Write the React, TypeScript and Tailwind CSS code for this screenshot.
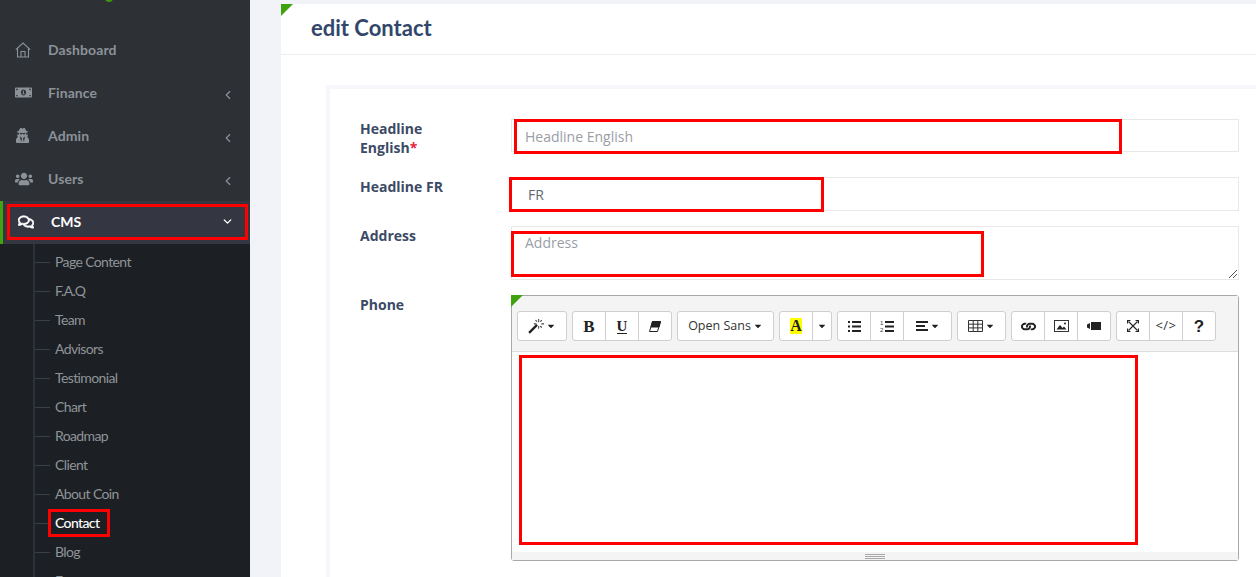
import React from "react";
import { FaMoneyBillAlt, FaUserSecret, FaUsers, FaRegComments, FaLink, FaCaretDown } from "react-icons/fa";
import { ChevronLeft, ChevronDown } from "lucide-react";

const Home = () => (
  <svg width="16" height="16" viewBox="0 0 16 16" fill="none" stroke="#8b9298" strokeWidth="1.1">
    <path d="M0.8 7.6 8 1l7.2 6.6M2.5 6.5V15h11V6.5M6 15V9.5h4V15" />
  </svg>
);

const Tool = ({ children, className = "w-[33px]" }: { children: React.ReactNode; className?: string }) => (
  <span className={`flex h-full shrink-0 items-center justify-center gap-[2px] border-r border-[#cfcfcf] text-[#222] last:flex-1 last:border-r-0 ${className}`}>
    {children}
  </span>
);

const Group = ({ children, className }: { children: React.ReactNode; className: string }) => (
  <div className={`flex h-[30px] shrink-0 overflow-hidden rounded-[3px] border border-[#cfcfcf] bg-white ${className}`}>{children}</div>
);

const Caret = () => <FaCaretDown className="text-[10px] text-[#222]" />;

const Magic = () => (
  <svg width="16" height="16" viewBox="0 0 15 15" fill="none">
    <path d="M1 14 8.5 6.5" stroke="#222" strokeWidth="2.2" />
    <path d="M10 1v3M10 7.5v2.5M5.5 5.5h2.5M12.5 5.5H15M7 2l1.5 1.5M13 2l-1.5 1.5M13 9l-1.5-1.5" stroke="#444" strokeWidth="1" />
  </svg>
);
const Eraser = () => (
  <svg width="12" height="11" viewBox="0 0 12 11">
    <path d="M3.5 0.5H11.5L8.5 10.5H0.5Z" fill="#fff" stroke="#222" />
    <path d="M3.5 0.5H11.5L10 6H2Z" fill="#222" stroke="#222" />
  </svg>
);
const Bullets = () => (
  <svg width="13" height="11" viewBox="0 0 13 11" fill="#222">
    <rect x="0" y="0" width="2" height="2" /><rect x="0" y="4.5" width="2" height="2" /><rect x="0" y="9" width="2" height="2" />
    <rect x="4" y="0" width="9" height="2" /><rect x="4" y="4.5" width="9" height="2" /><rect x="4" y="9" width="9" height="2" />
  </svg>
);
const Numbers = () => (
  <svg width="14" height="13" viewBox="0 0 14 13" fill="#222">
    <rect x="5" y="1" width="9" height="2" /><rect x="5" y="5.5" width="9" height="2" /><rect x="5" y="10" width="9" height="2" />
    <text x="0" y="5" fontSize="6" fill="#333" fontFamily="Liberation Sans">1</text>
    <text x="0" y="12" fontSize="6" fill="#333" fontFamily="Liberation Sans">2</text>
  </svg>
);
const Align = () => (
  <svg width="12" height="10" viewBox="0 0 12 10" fill="#222">
    <rect width="12" height="2" /><rect y="4" width="9" height="2" /><rect y="8" width="12" height="2" />
  </svg>
);
const Grid = () => (
  <svg width="15" height="12" viewBox="0 0 15 12" fill="none" stroke="#333" strokeWidth="1">
    <path d="M.5.5h14v11H.5zM.5 4.2h14M.5 7.9h14M5.2.5v11M9.8.5v11" />
  </svg>
);
const Picture = () => (
  <svg width="15" height="12" viewBox="0 0 15 12">
    <rect x=".5" y=".5" width="14" height="11" fill="none" stroke="#333" />
    <path d="M2.5 9.5 6 5l2.5 3L10 6.5l2.5 3z" fill="#222" />
    <circle cx="11" cy="3.5" r="1" fill="#222" />
  </svg>
);
const Video = () => (
  <svg width="14" height="8" viewBox="0 0 14 8" fill="#222">
    <path d="M0 2.5 3 1v6L0 5.5z" /><rect x="4" y="0" width="10" height="8" />
  </svg>
);
const Expand = () => (
  <svg width="12" height="12" viewBox="0 0 12 12" fill="none" stroke="#222">
    <path d="M1.5 1.5l9 9M10.5 1.5l-9 9" strokeWidth="1.1" />
    <path d="M.5 3.5v-3h3M8.5.5h3v3M11.5 8.5v3h-3M3.5 11.5h-3v-3" strokeWidth="1.2" />
  </svg>
);

const mainItems = [
  { label: "Dashboard", icon: <Home /> },
  { label: "Finance", icon: <FaMoneyBillAlt className="text-[17px] text-[#8b9298]" />, arrow: true },
  { label: "Admin", icon: <FaUserSecret className="text-[15px] text-[#8b9298]" />, arrow: true },
  { label: "Users", icon: <FaUsers className="text-[18px] text-[#8b9298]" />, arrow: true },
];

const subItems = ["Page Content", "F.A.Q", "Team", "Advisors", "Testimonial", "Chart", "Roadmap", "Client", "About Coin", "Contact", "Blog", "Faq"];

export default function App() {
  return (
    <div className="flex h-[577px] w-[1256px] overflow-hidden bg-[#f1f3f9] font-['Open_Sans',sans-serif]">
      <aside className="flex w-[250px] shrink-0 flex-col overflow-hidden bg-[#2d3035] font-['Lato',sans-serif]">
        <div className="flex h-[29px] shrink-0 items-start justify-center gap-[5px] pl-[4px]">
          <span className="-mt-[6px] h-[8px] w-[8px] rounded-full bg-[#3c9a0e]" />
          <span className="-mt-[12px] text-[11px] text-[#3c9a0e]">Admin</span>
        </div>
        {mainItems.map((it) => (
          <div key={it.label} className="flex h-[43px] shrink-0 items-center pb-[2px] pl-[15px] pr-[15px]">
            <span className="flex w-[33px] justify-start">{it.icon}</span>
            <span className="flex-1 text-[14px] font-bold tracking-[0.1px] text-[#8b9298]">{it.label}</span>
            {it.arrow && <ChevronLeft size={14} strokeWidth={2} className="mt-[4px] text-[#8b9298]" />}
          </div>
        ))}
        <div className="relative flex h-[43px] shrink-0 items-center bg-[#343741] pb-[2px] pl-[18px] pr-[16px]">
          <span className="absolute bottom-0 left-0 top-0 w-[3px] bg-[#3ea30e]" />
          <span className="absolute bottom-[4px] left-[7px] right-[2px] top-[3px] border-[3px] border-[#ff0000]" />
          <FaRegComments className="text-[16px] text-white" stroke="currentColor" strokeWidth={24} />
          <span className="ml-[17px] flex-1 text-[14px] font-bold text-white">CMS</span>
          <ChevronDown size={13} strokeWidth={2.6} className="text-white" />
        </div>
        <div className="relative flex-1 bg-[#1c1f23] pt-[3px]">
          <span className="absolute bottom-0 left-[33px] top-0 w-[2px] bg-[#2d3238]" />
          {subItems.map((s) => (
            <div key={s} className="relative flex h-[29px] shrink-0 items-center pl-[55px]">
              <span className="absolute left-[35px] top-[15px] h-[1px] w-[15px] bg-[#3a3f45]" />
              <span className={`relative text-[14px] tracking-[-0.62px] ${s === "Contact" ? "font-medium text-white" : "text-[#8f9499]"}`}>
                {s}
                {s === "Contact" && <span className="absolute -bottom-[4px] -left-[7px] -right-[11px] -top-[3px] border-[3px] border-[#ff0000]" />}
              </span>
            </div>
          ))}
        </div>
      </aside>

      <main className="min-w-0 flex-1 pl-[31px] pt-[4px]">
        <section className="relative h-[600px] bg-white">
          <span className="absolute left-0 top-0 h-0 w-0 border-r-[12px] border-t-[12px] border-r-transparent border-t-[#3ea30e]" />
          <header className="flex h-[51px] items-center border-b border-[#eceef4] pb-[4px] pl-[30px]">
            <h1 className="font-['Lato',sans-serif] text-[22px] font-bold text-[#32466b]">edit Contact</h1>
          </header>
          <div className="ml-[45px] mt-[30px] h-[520px] border-l-[4px] border-t-[4px] border-[#f6f7fa] pl-[30px] pr-[17px] pt-[30px]">
            <div className="flex h-[58px]">
              <label className="w-[151px] text-[14px] font-bold leading-[19px] text-[#3c4a66]">
                Headline<br />English<span className="text-[#e8203c]">*</span>
              </label>
              <div className="relative h-[33px] flex-1 border border-[#e8e8e8] pl-[13px] text-[14px] leading-[33px] text-[#9a9ea6]">
                Headline English
                <span className="absolute -left-[1px] -top-[1px] h-[35px] w-[608px] translate-x-[3px] border-[3px] border-[#ff0000]" />
              </div>
            </div>
            <div className="flex h-[49px]">
              <label className="w-[151px] text-[14px] font-bold leading-[19px] text-[#3c4a66]">Headline FR</label>
              <div className="relative h-[34px] flex-1 border border-[#e8e8e8] pl-[16px] text-[14px] leading-[34px] text-[#5f6772]">
                FR
                <span className="absolute -left-[3px] -top-[1px] h-[35px] w-[315px] border-[3px] border-[#ff0000]" />
              </div>
            </div>
            <div className="flex h-[69px]">
              <label className="w-[151px] text-[14px] font-bold leading-[19px] text-[#3c4a66]">Address</label>
              <div className="relative h-[54px] flex-1 border border-[#e8e8e8] pl-[13px] pt-[6px] text-[14px] leading-[19px] text-[#9a9ea6]">
                Address
                <span className="absolute -left-[1px] top-[4px] h-[46px] w-[473px] border-[3px] border-[#ff0000]" />
                <svg className="absolute bottom-[1px] right-[1px]" width="9" height="9" viewBox="0 0 9 9" stroke="#555" strokeWidth="1"><path d="M1 9 9 1M5 9 9 5" /></svg>
              </div>
            </div>
            <div className="flex">
              <label className="w-[151px] text-[14px] font-bold leading-[19px] text-[#3c4a66]">Phone</label>
              <div className="relative h-[266px] flex-1 rounded-[3px] border border-[#a9a9a9]">
                <span className="absolute -left-[1px] -top-[1px] z-10 h-0 w-0 border-r-[12px] border-t-[12px] border-r-transparent border-t-[#3ea30e]" />
                <div className="flex h-[56px] gap-[5px] border-b border-[#dedede] bg-[#f4f4f4] pl-[5px] pt-[15px]">
                  <Group className="w-[50px]"><Tool className="w-[48px]"><Magic /><Caret /></Tool></Group>
                  <Group className="w-[100px]">
                    <Tool><span className="font-['Liberation_Serif',serif] text-[17px] font-bold leading-none">B</span></Tool>
                    <Tool><span className="border-b-[1.5px] border-[#222] font-['Liberation_Serif',serif] text-[15px] font-bold leading-[14px]">U</span></Tool>
                    <Tool><Eraser /></Tool>
                  </Group>
                  <Group className="w-[97px]"><Tool className="w-[95px]"><span className="text-[12.5px] text-[#333]">Open Sans</span><Caret /></Tool></Group>
                  <Group className="w-[53px]">
                    <Tool><span className="flex h-[16px] w-[12px] items-center justify-center bg-[#ffff00] font-['Liberation_Serif',serif] text-[16px] font-bold leading-none">A</span></Tool>
                    <Tool className="w-[18px]"><Caret /></Tool>
                  </Group>
                  <Group className="w-[115px]">
                    <Tool><Bullets /></Tool>
                    <Tool><Numbers /></Tool>
                    <Tool className="w-[47px]"><Align /><Caret /></Tool>
                  </Group>
                  <Group className="w-[49px]"><Tool className="w-[47px]"><Grid /><Caret /></Tool></Group>
                  <Group className="w-[100px]">
                    <Tool><FaLink className="rotate-45 text-[13px]" /></Tool>
                    <Tool><Picture /></Tool>
                    <Tool><Video /></Tool>
                  </Group>
                  <Group className="w-[100px]">
                    <Tool><Expand /></Tool>
                    <Tool><span className="text-[13px] tracking-[0.5px] text-[#333]">&lt;/&gt;</span></Tool>
                    <Tool><span className="font-['Liberation_Sans',sans-serif] text-[17px] font-bold leading-none">?</span></Tool>
                  </Group>
                </div>
                <div className="relative h-[200px] bg-white">
                  <span className="absolute left-[7px] top-[3px] h-[190px] w-[619px] border-[3px] border-[#ff0000]" />
                </div>
                <div className="flex h-[8px] flex-col items-center justify-center gap-[1px] bg-[#f4f4f4]">
                  <span className="h-[1px] w-[20px] bg-[#a9a9a9]" />
                  <span className="h-[1px] w-[20px] bg-[#a9a9a9]" />
                  <span className="h-[1px] w-[20px] bg-[#a9a9a9]" />
                </div>
              </div>
            </div>
          </div>
        </section>
      </main>
    </div>
  );
}
